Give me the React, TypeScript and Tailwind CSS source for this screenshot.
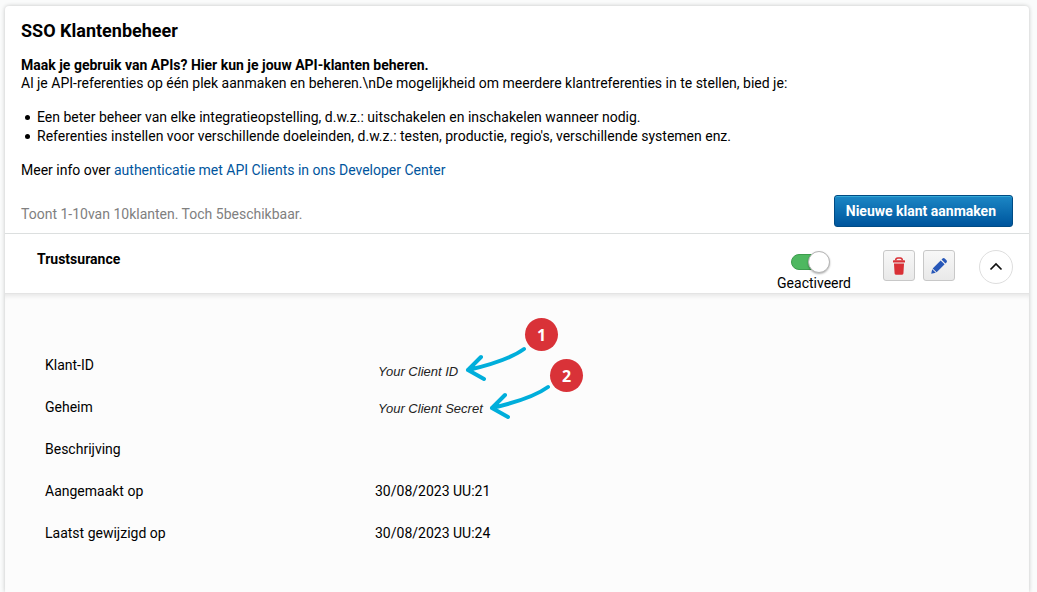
import { useState } from 'react';

const details = [
  { label: 'Aangemaakt op', value: '30/08/2023 UU:21' },
  { label: 'Laatst gewijzigd op', value: '30/08/2023 UU:24' },
];

const benefits = [
  'Een beter beheer van elke integratieopstelling, d.w.z.: uitschakelen en inschakelen wanneer nodig.',
  "Referenties instellen voor verschillende doeleinden, d.w.z.: testen, productie, regio's, verschillende systemen enz.",
];

function TrashIcon() {
  return (
    <svg width="14" height="18" viewBox="0 0 14 18" aria-hidden="true">
      <path d="M3.6 3.4Q3.8 1 5.8 1h2.4q2 0 2.2 2.4" fill="none" stroke="#d93036" strokeWidth="1.5" />
      <rect x="1" y="3.2" width="12" height="2.4" rx=".6" fill="#d93036" />
      <path d="M2 6.6h10l-.6 10q-.1 1.1-1.2 1.1H3.8q-1.1 0-1.2-1.1z" fill="#d93036" />
    </svg>
  );
}

function PencilIcon() {
  return (
    <svg width="18" height="18" viewBox="0 0 18 18" aria-hidden="true">
      <g fill="#2757b8">
        <path d="M12.6 1.5q1.1-1 2.1 0l1.8 1.8q1 1 0 2.1L15.4 6.5 11.5 2.6z" />
        <path d="M10.7 3.4 14.6 7.3 6.6 15.3 2.7 11.4z" />
        <path d="M2.2 12.2 5.8 15.8 1.2 16.8z" />
      </g>
    </svg>
  );
}

function Arrow() {
  return (
    <svg width="64" height="38" viewBox="0 0 64 38" aria-hidden="true">
      <path
        d="M60 4C49 12 30 19 4 25M17 12 4 25 20 34"
        fill="none"
        stroke="#00aedb"
        strokeWidth="4"
        strokeLinecap="round"
        strokeLinejoin="round"
      />
    </svg>
  );
}

export default function App() {
  const [active, setActive] = useState(true);
  const [open, setOpen] = useState(true);

  return (
    <div className="flex min-h-screen flex-col bg-[#fafbfb] pt-[6px] pr-2 pl-[5px] font-['Roboto',sans-serif] text-sm leading-[18px] text-black">
      <main className="flex flex-1 flex-col rounded-t bg-white shadow-[0_0_4px_rgba(0,0,0,0.22)]">
        <header className="border-b border-[#dcdfdf] px-4 pt-[13px] pb-[6px]">
          <h1 className="mb-[13px] text-lg leading-6 font-bold">SSO Klantenbeheer</h1>
          <p className="font-bold">Maak je gebruik van APIs? Hier kun je jouw API-klanten beheren.</p>
          <p>
            Al je API-referenties op één plek aanmaken en beheren.\nDe mogelijkheid om meerdere
            klantreferenties in te stellen, bied je:
          </p>
          <ul className="mt-4 mb-[15px] leading-[19px]">
            {benefits.map((text) => (
              <li
                key={text}
                className="flex items-center before:mr-[7px] before:ml-1 before:size-[5px] before:shrink-0 before:rounded-full before:bg-black before:content-['']"
              >
                {text}
              </li>
            ))}
          </ul>
          <p>
            Meer info over{' '}
            <a href="#developer-center" className="text-[#00559d]">
              authenticatie met API Clients in ons Developer Center
            </a>
          </p>
          <div className="mt-4 flex items-center justify-between">
            <p className="pt-[6px] text-[#808080]">Toont 1-10van 10klanten. Toch 5beschikbaar.</p>
            <button
              type="button"
              className="h-8 rounded-[3px] border border-[#004b84] bg-linear-to-b from-[#1c87c5] to-[#00559d] pr-4 pl-[11px] font-bold text-white shadow-[inset_0_1px_0_#35a9d6]"
            >
              Nieuwe klant aanmaken
            </button>
          </div>
        </header>

        <section className="flex flex-1 flex-col">
          <div className="flex h-[60px] items-start border-b border-[#e4e4e4] pr-4 pl-8">
            <h2 className="flex-1 pt-4 font-bold">Trustsurance</h2>
            <label className="mr-8 flex flex-col items-center pt-[17px]">
              <span className="relative mb-[1px] flex h-[22px] w-[46px] items-center">
                <input
                  type="checkbox"
                  role="switch"
                  checked={active}
                  onChange={(e) => setActive(e.target.checked)}
                  className="peer h-4 w-8 appearance-none rounded-full border border-[#3d9c4d] bg-[#c4c4c4] checked:bg-[#4eb860]"
                />
                <span className="pointer-events-none absolute top-0 left-0 size-[22px] rounded-full border border-[#b4b4b4] bg-white shadow-[0_1px_2px_rgba(0,0,0,0.3)] peer-checked:left-[17px]" />
              </span>
              Geactiveerd
            </label>
            <div className="mt-4 flex gap-2">
              <button
                type="button"
                aria-label="Verwijderen"
                className="flex h-[31px] w-8 items-center justify-center rounded-[3px] border border-[#c8c8c8] bg-linear-to-b from-[#f7f7f7] to-[#e9e9e9]"
              >
                <TrashIcon />
              </button>
              <button
                type="button"
                aria-label="Bewerken"
                className="flex h-[31px] w-8 items-center justify-center rounded-[3px] border border-[#c8c8c8] bg-linear-to-b from-[#f7f7f7] to-[#e9e9e9]"
              >
                <PencilIcon />
              </button>
            </div>
            <button
              type="button"
              aria-label="Details"
              aria-expanded={open}
              onClick={() => setOpen(!open)}
              className="mt-4 ml-6 flex size-[34px] items-center justify-center rounded-full border border-[#dedede] bg-white"
            >
              <svg width="14" height="14" viewBox="0 0 14 14" aria-hidden="true">
                <path d="M1.5 9.5 7 4l5.5 5.5" fill="none" stroke="#111" strokeWidth="1.7" />
              </svg>
            </button>
          </div>

          {open && (
            <div className="relative flex-1 bg-[#fcfcfc] px-10 pt-[50px] shadow-[inset_0_5px_5px_-3px_rgba(0,0,0,0.09)]">
              <table className="w-full table-fixed text-left">
                <tbody>
                  <tr className="h-[42px]">
                    <th scope="row" className="w-[330px] font-normal">Klant-ID</th>
                    <td className="pb-[5px] pl-[3px] align-bottom font-['Liberation_Sans',sans-serif] text-[13px] text-[#222] italic">
                      Your Client ID
                    </td>
                  </tr>
                  <tr className="h-[42px]">
                    <th scope="row" className="font-normal">Geheim</th>
                    <td className="pt-[3px] pl-[3px] font-['Liberation_Sans',sans-serif] text-[13px] text-[#222] italic">
                      Your Client Secret
                    </td>
                  </tr>
                  <tr className="h-[42px]">
                    <th scope="row" className="font-normal">Beschrijving</th>
                    <td />
                  </tr>
                  {details.map((row) => (
                    <tr key={row.label} className="h-[42px]">
                      <th scope="row" className="font-normal">{row.label}</th>
                      <td>{row.value}</td>
                    </tr>
                  ))}
                </tbody>
              </table>

              {/* Numbered pointers over the two credentials */}
              <div className="pointer-events-none absolute top-[51px] left-[459px]">
                <Arrow />
              </div>
              <div className="pointer-events-none absolute top-[89px] left-[483px]">
                <Arrow />
              </div>
              <span className="absolute top-6 left-[520px] flex size-[33px] items-center justify-center rounded-full bg-[#d93238] font-['Open_Sans',sans-serif] text-base font-bold text-white">
                1
              </span>
              <span className="absolute top-[65px] left-[545px] flex size-[33px] items-center justify-center rounded-full bg-[#d93238] font-['Open_Sans',sans-serif] text-base font-bold text-white">
                2
              </span>
            </div>
          )}
        </section>
      </main>
    </div>
  );
}
